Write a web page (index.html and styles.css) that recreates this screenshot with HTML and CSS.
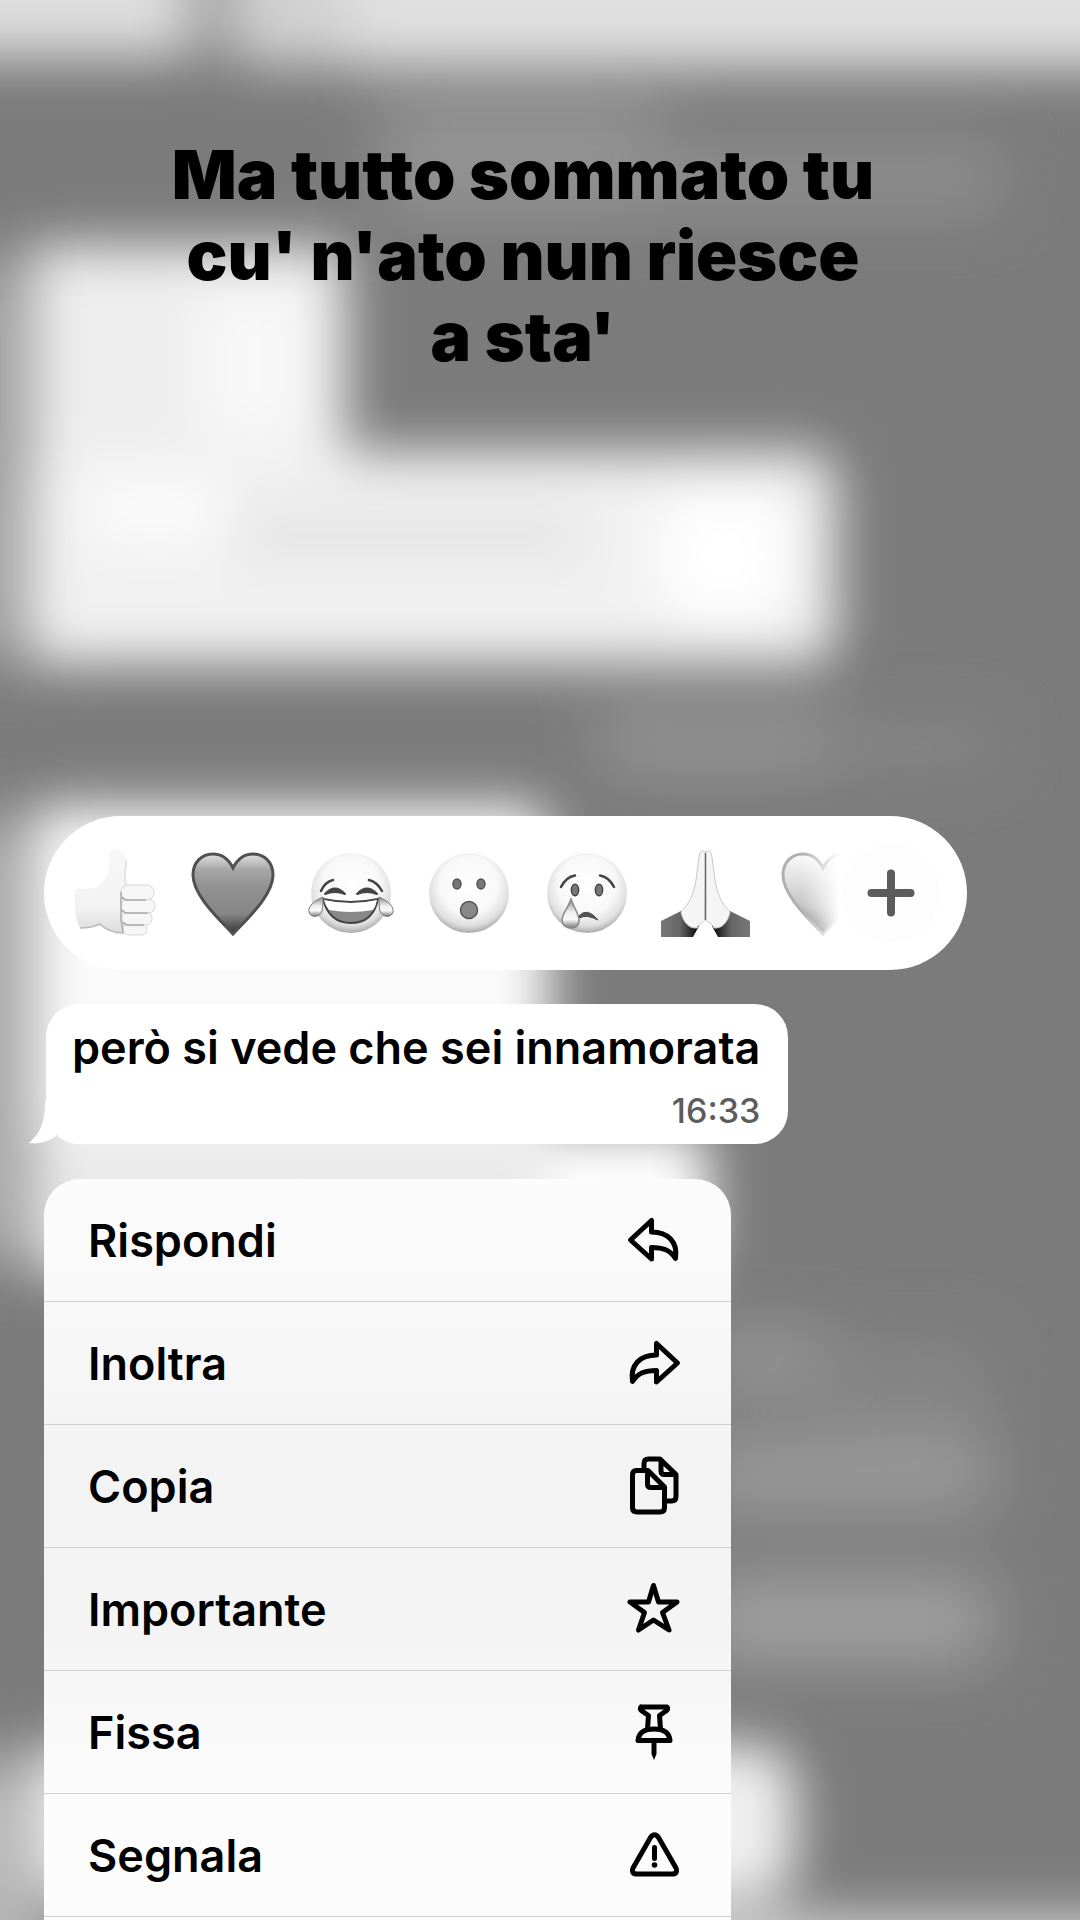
FILE: index.html
```html
<!DOCTYPE html>
<html lang="it">
<head>
<meta charset="utf-8">
<meta name="viewport" content="width=device-width, initial-scale=1">
<title>Messaggio</title>
<link rel="stylesheet" href="styles.css">
</head>
<body>
<svg class="backdrop" viewBox="0 0 1080 1920" preserveAspectRatio="none" aria-hidden="true">
  <defs>
    <filter id="soft" x="-200" y="-200" width="1480" height="2320" filterUnits="userSpaceOnUse"><feGaussianBlur stdDeviation="26"/></filter>
    <filter id="softer" x="-200" y="-200" width="1480" height="2320" filterUnits="userSpaceOnUse"><feGaussianBlur stdDeviation="32"/></filter>
  </defs>
  <rect width="1080" height="1920" fill="#7b7b7b"/>
  <g filter="url(#softer)">
    <rect x="-100" y="260" width="150" height="400" fill="#a0a0a0"/>
    <rect x="-100" y="820" width="150" height="440" fill="#a8a8a8"/>
    <rect x="-100" y="1760" width="150" height="260" fill="#b8b8b8"/>
    <rect x="380" y="90" width="280" height="130" fill="#929292"/>
    <rect x="600" y="145" width="400" height="65" fill="#8f8f8f"/>
    <rect x="600" y="710" width="230" height="60" fill="#969696"/>
    <rect x="820" y="725" width="180" height="40" fill="#888"/>
    <rect x="700" y="1335" width="130" height="50" fill="#9c9c9c"/>
    <rect x="820" y="1340" width="170" height="90" fill="#858585"/>
    <rect x="700" y="1440" width="290" height="70" fill="#9c9c9c"/>
    <rect x="700" y="1580" width="290" height="80" fill="#a2a2a2"/>
  </g>
  <g filter="url(#soft)">
    <rect x="-100" y="-100" width="290" height="158" fill="#dedede"/>
    <rect x="180" y="-100" width="62" height="155" fill="#a8a8a8"/>
    <rect x="242" y="-100" width="110" height="165" fill="#d2d2d2"/>
    <rect x="350" y="-100" width="900" height="168" fill="#e0e0e0"/>
    <rect x="30" y="246" width="316" height="260" rx="20" fill="#eee"/>
    <rect x="200" y="290" width="110" height="150" fill="#f8f8f8"/>
    <rect x="26" y="452" width="810" height="212" rx="30" fill="#f1f1f1"/>
    <rect x="90" y="480" width="130" height="60" fill="#fcfcfc"/>
    <rect x="660" y="490" width="130" height="130" rx="40" fill="#fff"/>
    <rect x="240" y="510" width="340" height="50" fill="#e4e4e4"/>
    <rect x="30" y="806" width="520" height="360" rx="30" fill="#fafafa"/>
    <rect x="30" y="1130" width="680" height="145" rx="30" fill="#e9e9e9"/>
    <rect x="550" y="1130" width="150" height="110" fill="#fff"/>
    <rect x="30" y="1745" width="765" height="155" rx="40" fill="#f0f0f0"/>
    <rect x="600" y="1915" width="600" height="100" fill="#d0d0d0"/>
  </g>
</svg>

<main class="screen">
  <h1 class="caption">Ma tutto sommato tu<br>cu' n'ato nun riesce<br>a sta'</h1>

  <section class="reactions" aria-label="Reazioni">
    <svg class="defs" aria-hidden="true">
      <defs>
        <radialGradient id="face" cx=".5" cy=".4" r=".6">
          <stop offset="0" stop-color="#fff"/><stop offset=".6" stop-color="#f8f8f8"/><stop offset=".85" stop-color="#dedede"/><stop offset="1" stop-color="#aaa"/>
        </radialGradient>
        <linearGradient id="heart" x2="0" y2="1">
          <stop offset="0" stop-color="#e0e0e0"/><stop offset=".2" stop-color="#a6a6a6"/><stop offset=".4" stop-color="#929292"/><stop offset=".75" stop-color="#868686"/><stop offset="1" stop-color="#333"/>
        </linearGradient>
        <linearGradient id="paleheart" x2="0" y2="1">
          <stop offset="0" stop-color="#fafafa"/><stop offset=".35" stop-color="#dedede"/><stop offset=".65" stop-color="#c4c4c4"/><stop offset="1" stop-color="#707070"/>
        </linearGradient>
        <linearGradient id="drop" x2="0" y2="1">
          <stop offset="0" stop-color="#888"/><stop offset=".45" stop-color="#eee"/><stop offset=".7" stop-color="#fafafa"/><stop offset="1" stop-color="#777"/>
        </linearGradient>
        <linearGradient id="skin" x2="0" y2="1">
          <stop offset="0" stop-color="#f8f8f8"/><stop offset=".7" stop-color="#f2f2f2"/><stop offset="1" stop-color="#dcdcdc"/>
        </linearGradient>
        <linearGradient id="sleeve">
          <stop offset="0" stop-color="#777"/><stop offset=".5" stop-color="#666"/><stop offset="1" stop-color="#000"/>
        </linearGradient>
      </defs>
    </svg>
    <div class="emoji-list">
      <button class="emoji" type="button" aria-label="Pollice in su">
        <svg viewBox="0 0 90 90">
          <path d="M46 1C40 1 37 6 39 13C41 24 36 32 26 40C20 41 10 40 6 41C3 52 5 70 10 80C17 80 24 78 30 77C36 82 44 85 54 85L62 80V38L56 34C53 28 57 20 56 12C55 5 51 1 46 1Z" fill="url(#skin)"/>
          <path d="M10 80C17 80 24 79 30 76C36 82 44 85 54 85" fill="none" stroke="#b8b8b8" stroke-width="1.5"/>
          <path d="M56 12C57 20 53 28 56 36" fill="none" stroke="#dedede" stroke-width="1.5"/>
          <g fill="#f6f6f6" stroke="#d6d6d6" stroke-width="1">
            <rect x="53" y="76" width="24" height="11" rx="5.5"/><rect x="52" y="64" width="30" height="13" rx="6"/>
            <rect x="51" y="51" width="34" height="14" rx="6.5"/><rect x="51" y="37" width="33" height="15" rx="7"/>
          </g>
          <path d="M52 49Q54 52 58 52H76M52 62Q54 65 58 65H78M53 74Q55 77 59 77H74M51 44V72L53 84" fill="none" stroke="#aaa" stroke-width="1.5"/>
        </svg>
      </button>
      <button class="emoji" type="button" aria-label="Cuore">
        <svg viewBox="0 0 90 90"><path d="M45 86C30 70 5 47 5 27C5 14 14 6 25 6C34 6 41 12 45 20C49 12 56 6 65 6C76 6 85 14 85 27C85 47 60 70 45 86Z" fill="url(#heart)" stroke="#505050" stroke-width="3"/></svg>
      </button>
      <button class="emoji" type="button" aria-label="Risata con lacrime">
        <svg viewBox="0 0 90 90">
          <circle cx="45" cy="45" r="40" fill="url(#face)"/>
          <path d="M15 43Q19 34 27 32M63 32Q71 34 76 43" fill="none" stroke="#444" stroke-width="2.5" stroke-linecap="round"/>
          <path d="M19 46Q29 35 39 46Q29 42 19 46ZM51 46Q61 35 71 46Q61 42 51 46Z" fill="#444" stroke="#444" stroke-width="2" stroke-linejoin="round"/>
          <path d="M17 51Q45 57 72 51Q67 75 45 75Q23 75 17 51Z" fill="#888" stroke="#444" stroke-width="2"/>
          <path d="M18 52Q45 58 71 52Q70 58 67 62Q45 66 23 62Q19 57 18 52Z" fill="#fff"/>
          <path d="M17 49C8 53 2 58 3 64C4 70 14 70 16 63C17 58 17 54 17 49ZM73 49C82 53 88 58 87 64C86 70 76 70 74 63C73 58 73 54 73 49Z" fill="url(#drop)" stroke="#777" stroke-width="1"/>
        </svg>
      </button>
      <button class="emoji" type="button" aria-label="Stupore">
        <svg viewBox="0 0 90 90">
          <circle cx="45" cy="45" r="40" fill="url(#face)"/>
          <g fill="#777" stroke="#555" stroke-width="1.5"><ellipse cx="33" cy="36" rx="4" ry="5"/><ellipse cx="57" cy="36" rx="4" ry="5"/><circle cx="45" cy="62" r="8.5" fill="#888"/></g>
        </svg>
      </button>
      <button class="emoji" type="button" aria-label="Pianto">
        <svg viewBox="0 0 90 90">
          <circle cx="45" cy="45" r="40" fill="url(#face)"/>
          <path d="M19 39Q24 29 33 27.5M58 27.5Q67 29 72 39" fill="none" stroke="#444" stroke-width="2.5" stroke-linecap="round"/>
          <g fill="#777" stroke="#444" stroke-width="1.5"><ellipse cx="33" cy="42" rx="3.6" ry="5.8"/><ellipse cx="57" cy="42" rx="3.6" ry="5.8"/></g>
          <path d="M36 69Q45 58 56 72Q45 66 37 70Z" fill="#555" stroke="#444" stroke-width="1"/>
          <path d="M29 51C26 60 20 66 20 72C20 77 24 80 29 80C34 80 37 77 37 72C37 66 32 60 29 51Z" fill="url(#drop)" stroke="#888" stroke-width="1.5"/>
        </svg>
      </button>
      <button class="emoji" type="button" aria-label="Mani giunte">
        <svg viewBox="0 0 90 90">
          <g id="palm">
            <path d="M1 73L21 63L29 76L39 78L33 89H1Z" fill="url(#sleeve)"/>
            <path d="M45.5 4Q41 1 39.500 6L36 32C34 46 29 56 21 64C23 74 29 81 37 80C39 75 43 75 46 71Z" fill="#f5f5f5" stroke="#c8c8c8" stroke-width="1"/>
          </g>
          <use href="#palm" transform="matrix(-1 0 0 1 91 0)"/>
          <path d="M45.5 5V72" stroke="#666" stroke-width="1.5"/>
        </svg>
      </button>
      <button class="emoji" type="button" aria-label="Cuore bianco">
        <svg viewBox="0 0 90 90"><path d="M45 86C30 70 5 47 5 27C5 14 14 6 25 6C34 6 41 12 45 20C49 12 56 6 65 6C76 6 85 14 85 27C85 47 60 70 45 86Z" fill="url(#paleheart)" stroke="#b0b0b0" stroke-width="3"/></svg>
      </button>
    </div>
    <button class="more" type="button" aria-label="Altre reazioni">
      <svg viewBox="0 0 48 48"><path d="M24 4.5V43.5M4.5 24H43.5" stroke="#5c5c5c" stroke-width="8" stroke-linecap="round"/></svg>
    </button>
  </section>

  <article class="bubble">
    <svg class="tail" viewBox="0 0 30 42" aria-hidden="true"><path d="M17 0C17 22 12 31 1 41C12 42 20 40 28 34L30 0Z" fill="#fff"/></svg>
    <p class="message">però si vede che sei innamorata</p>
    <time class="time" datetime="16:33">16:33</time>
  </article>

  <nav class="menu" aria-label="Azioni messaggio">
    <button class="item" type="button"><span>Rispondi</span>
      <svg class="icon" viewBox="0 0 60 60"><path d="M6.5 30L27.5 10.5V22C44 22 54 32 51.5 48.5C46 40 39 37.5 27.5 37.5V49Z"/></svg></button>
    <button class="item" type="button"><span>Inoltra</span>
      <svg class="icon" viewBox="0 0 60 60"><path d="M53.5 30L32.5 10.5V22C16 22 6 32 8.5 48.5C14 40 21 37.5 32.5 37.5V49Z"/></svg></button>
    <button class="item" type="button"><span>Copia</span>
      <svg class="icon" viewBox="0 0 60 60"><path d="M12.5 14.5H24L40.5 31V51.5Q40.5 56 36 56H13Q8.5 56 8.5 51.5V19Q8.5 14.5 12.5 14.5ZM23.5 15V28Q23.5 31.500 27 31.500H40M20 13V7.500Q20 3 24.500 3H36L52 18.500V40.500Q52 45 47.500 45H42M37 4V15Q37 18.500 40.500 18.500H51"/></svg></button>
    <button class="item" type="button"><span>Importante</span>
      <svg class="icon" viewBox="0 0 60 60"><path d="M29.5 6.5L34.5 23H53L38.5 33.5L45 51L29.5 41L14.5 51L20.5 33.5L6 23H24.5Z"/></svg></button>
    <button class="item" type="button"><span>Fissa</span>
      <svg class="icon" viewBox="0 0 60 60"><path d="M17 5H43Q44.5 7 42 9L35.5 13.500L36.500 27M17 5Q15.500 7 18 9L24.500 13.500L23.500 27M14 38.500Q15 27 30 27Q45 27 46 38.500Z"/><path class="fill" d="M27.500 40H32.500V52L30 58L27.500 52Z"/></svg></button>
    <button class="item" type="button"><span>Segnala</span>
      <svg class="icon" viewBox="0 0 60 60"><path d="M26.5 12.5Q30.5 7 34.5 12.5L52 43Q54 49 48 49H13Q7 49 9 43ZM30.5 22.5V33.5"/><circle class="fill" cx="30.5" cy="40" r="2.8"/></svg></button>
  </nav>
</main>
</body>
</html>
```
FILE: styles.css
```css
* {
  box-sizing: border-box;
}

body {
  margin: 0;
  min-height: 100vh;
  background: #7b7b7b;
  color: #000;
  font-family: Inter, "Liberation Sans", sans-serif;
}

button {
  margin: 0;
  border: 0;
  background: none;
  color: inherit;
  font: inherit;
  cursor: pointer;
}

svg {
  display: block;
}

.backdrop {
  position: fixed;
  inset: 0;
  width: 100%;
  height: 100%;
}

.defs {
  position: absolute;
  width: 0;
  height: 0;
}

.screen {
  position: relative;
  display: flex;
  flex-direction: column;
  align-items: flex-start;
  height: 100vh;
  padding: 134px 34px 0 44px;
  overflow: hidden;
}

.caption {
  align-self: stretch;
  margin: 0 44px 439px 0;
  font-size: 68px;
  font-weight: 900;
  line-height: 81px;
  text-align: center;
}

.reactions {
  display: flex;
  flex: none;
  align-items: center;
  width: 100%;
  max-width: 923px;
  height: 154px;
  padding: 0 27px 0 12px;
  border-radius: 77px;
  background: #fff;
}

.emoji-list {
  display: flex;
  flex: 1;
  min-width: 0;
  overflow: hidden;
  -webkit-mask-image: linear-gradient(to left, transparent 2px, #000 40px);
  mask-image: linear-gradient(to left, transparent 2px, #000 40px);
}

.emoji {
  flex: none;
  width: 118px;
  padding: 0 14px;
}

.emoji svg {
  width: 90px;
  height: 90px;
}

.more {
  display: grid;
  flex: none;
  place-items: center;
  width: 98px;
  height: 98px;
  padding: 0;
  border-radius: 50%;
  background: #fdfdfd;
}

.more svg {
  width: 48px;
  height: 48px;
}

.bubble {
  position: relative;
  flex: none;
  display: flex;
  flex-direction: column;
  gap: 8px;
  margin: 34px 0 35px 2px;
  padding: 14px 28px 8px 26px;
  border-radius: 33px;
  background: #fff;
}

.tail {
  position: absolute;
  bottom: 0;
  left: -18px;
  width: 30px;
  height: 42px;
}

.message {
  margin: 0;
  font-size: 45px;
  font-weight: 600;
  line-height: 60px;
}

.time {
  align-self: flex-end;
  color: #5c5c5c;
  font-size: 34px;
  font-weight: 500;
  line-height: 50px;
}

.menu {
  flex: none;
  width: 100%;
  max-width: 687px;
  padding-bottom: 40px;
  border-radius: 36px;
  background: linear-gradient(#fcfcfc, #f3f3f3 300px, #f4f4f4 450px, #fcfcfc 620px, #fdfdfd);
}

.item {
  display: flex;
  align-items: center;
  justify-content: space-between;
  width: 100%;
  height: 123px;
  padding: 0 47px 0 44px;
  border-bottom: 1px solid #d0d0d0;
  font-size: 45px;
  font-weight: 600;
  text-align: left;
}

.icon {
  width: 60px;
  height: 60px;
  fill: none;
  stroke: #000;
  stroke-width: 5;
  stroke-linecap: round;
  stroke-linejoin: round;
}

.icon .fill {
  fill: #000;
  stroke: none;
}
```
